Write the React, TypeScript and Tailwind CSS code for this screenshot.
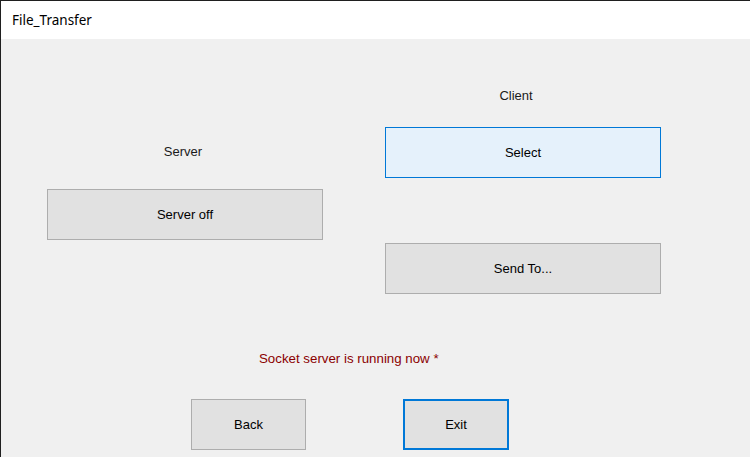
import React from "react";

// Botón estilo WinForms: gris con borde #adadad; "hover" azul claro; "focus" con borde doble azul.
function WinButton({
  label,
  width,
  variant = "normal",
}: {
  label: string;
  width: string;
  variant?: "normal" | "hover" | "focus";
}) {
  const look =
    variant === "hover"
      ? "bg-[#e5f1fb] border border-[#0078d7]"
      : variant === "focus"
        ? "bg-[#e1e1e1] border-2 border-[#0078d7]"
        : "bg-[#e1e1e1] border border-[#adadad]";
  return (
    <button className={`${width} h-[51px] flex items-center justify-center text-[13px] text-black ${look}`}>
      {label}
    </button>
  );
}

export default function App() {
  return (
    <div
      className="w-[750px] h-[457px] flex flex-col border-l border-t border-[#1f1f1f] overflow-hidden"
      style={{ fontFamily: '"Liberation Sans", Arial, sans-serif' }}
    >
      {/* Barra de título */}
      <div className="h-[38px] flex-shrink-0 bg-white flex items-center pl-[11px]">
        <span className="text-[13.5px] text-black" style={{ fontFamily: '"Noto Sans", "Open Sans", sans-serif' }}>
          File_Transfer
        </span>
      </div>

      {/* Cuerpo del formulario */}
      <div className="flex-1 bg-[#f0f0f0] flex flex-col">
        <div className="flex pl-[46px]">
          {/* Columna servidor */}
          <div className="w-[276px] flex flex-col pt-[105px]">
            <span className="h-4 leading-4 text-center pr-[4px] text-[13px] text-[#1a1a1a]">Server</span>
            <div className="mt-[29px]">
              <WinButton label="Server off" width="w-[276px]" />
            </div>
          </div>

          {/* Columna cliente */}
          <div className="w-[276px] ml-[62px] flex flex-col pt-[49px]">
            <span className="h-4 leading-4 text-center pr-[14px] text-[13px] text-[#1a1a1a]">Client</span>
            <div className="mt-[23px]">
              <WinButton label="Select" width="w-[276px]" variant="hover" />
            </div>
            <div className="mt-[65px]">
              <WinButton label="Send To..." width="w-[276px]" />
            </div>
          </div>
        </div>

        <div className="mt-[57px] pl-[258px] h-4 leading-4 text-[13.3px] text-[#8b0000]">
          Socket server is running now *
        </div>

        <div className="mt-[32px] flex pl-[190px]">
          <WinButton label="Back" width="w-[115px]" />
          <div className="ml-[97px]">
            <WinButton label="Exit" width="w-[106px]" variant="focus" />
          </div>
        </div>
      </div>
    </div>
  );
}
